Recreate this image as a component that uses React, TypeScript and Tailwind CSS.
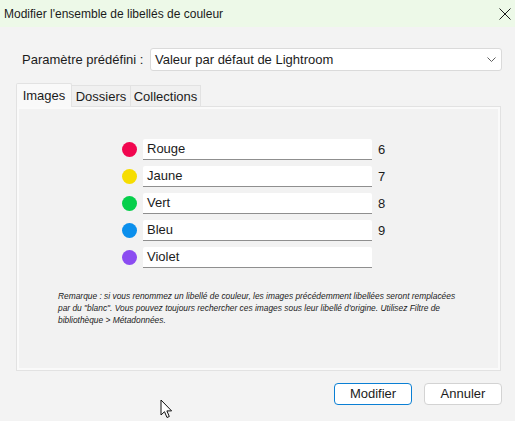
import React from "react";

const labels = [
  { name: "Rouge", color: "bg-[#f1064f]", key: "6" },
  { name: "Jaune", color: "bg-[#f6dd00]", key: "7" },
  { name: "Vert", color: "bg-[#06cf4b]", key: "8" },
  { name: "Bleu", color: "bg-[#0b8fec]", key: "9" },
  { name: "Violet", color: "bg-[#8b4cf1]", key: "" },
];

const CloseIcon = () => (
  <svg width="12" height="12" viewBox="0 0 12 12" fill="none" stroke="#1a1a1a" strokeWidth="1">
    <path d="M0.5 0.5 L11.5 11.5 M11.5 0.5 L0.5 11.5" />
  </svg>
);

const Chevron = () => (
  <svg width="9" height="5" viewBox="0 0 9 5" fill="none" stroke="#5f5f5f" strokeWidth="1">
    <path d="M0.5 0.5 L4.5 4.5 L8.5 0.5" />
  </svg>
);

const Cursor = () => (
  <svg width="13" height="20" viewBox="0 0 13 20" className="absolute left-[160px] top-[399px]">
    <path
      d="M1 1 L1 16 L4.5 12.7 L7 18.5 L9.3 17.5 L6.9 11.9 L11.6 11.9 Z"
      fill="#ffffff"
      stroke="#111111"
      strokeWidth="1"
      strokeLinejoin="round"
    />
  </svg>
);

export default function App() {
  return (
    <div className="relative w-[515px] h-[421px] overflow-hidden bg-[#f3f3f3] font-['Segoe_UI','Liberation_Sans',sans-serif] text-[#1b1b1b]">
      {/* barre de titre */}
      <div className="flex h-[27px] items-center justify-between bg-[#edf9e8] pl-[4px] pr-[4px]">
        <span className="text-[12px]">Modifier l'ensemble de libellés de couleur</span>
        <CloseIcon />
      </div>

      {/* paramètre prédéfini */}
      <div className="mt-[21px] flex items-center pl-[22px] pr-[13px]">
        <span className="w-[128px] text-[13px]">Paramètre prédéfini :</span>
        <div className="flex h-[23px] flex-1 items-center justify-between rounded-[3px] border border-[#dadada] bg-white pl-[4px] pr-[5px]">
          <span className="text-[13px]">Valeur par défaut de Lightroom</span>
          <Chevron />
        </div>
      </div>

      {/* onglets */}
      <div className="mt-[12px] flex items-end pl-[16px]">
        <div className="relative z-10 -mb-px flex h-[24px] w-[56px] items-center justify-center rounded-t-[2px] border border-b-0 border-[#e2e2e2] bg-[#f9f9f9] text-[13px]">
          Images
        </div>
        <div className="flex h-[21px] w-[59px] items-center justify-center border border-l-0 border-b-0 border-[#e2e2e2] bg-[#f0f0f0] pt-[2px] text-[13px]">
          Dossiers
        </div>
        <div className="flex h-[21px] w-[70px] items-center justify-center border border-l-0 border-b-0 border-[#e2e2e2] bg-[#f0f0f0] pt-[2px] text-[13px]">
          Collections
        </div>
      </div>

      {/* panneau */}
      <div className="ml-[16px] mr-[14px] h-[265px] border border-[#e2e2e2] bg-[#f2f2f2] shadow-[inset_0_0_0_2px_#fafafa]">
        <div className="mt-[32px] flex flex-col gap-[6px] pl-[105px]">
          {labels.map((l) => (
            <div key={l.name} className="flex h-[21px] items-center">
              <span className={`h-[15px] w-[15px] rounded-full ${l.color}`} />
              <div className="ml-[6px] flex h-[21px] w-[229px] items-center rounded-t-[2px] border-b border-[#8f8f8f] bg-white pl-[4px] text-[13px]">
                {l.name}
              </div>
              <span className="ml-[6px] text-[13px]">{l.key}</span>
            </div>
          ))}
        </div>
        <p className="mt-[22px] pl-[41px] text-[8.4px] italic leading-[12px] text-[#222]">
          <span className="block whitespace-nowrap">
            Remarque : si vous renommez un libellé de couleur, les images précédemment libellées seront remplacées
          </span>
          <span className="block whitespace-nowrap">
            par du "blanc". Vous pouvez toujours rechercher ces images sous leur libellé d'origine. Utilisez Filtre de
          </span>
          <span className="block whitespace-nowrap">bibliothèque &gt; Métadonnées.</span>
        </p>
      </div>

      {/* boutons */}
      <div className="mt-[12px] flex justify-end gap-[12px] pr-[13px]">
        <button className="h-[22px] w-[78px] rounded-[4px] border border-[#0a7fd4] bg-white text-[13px]">
          Modifier
        </button>
        <button className="h-[22px] w-[78px] rounded-[4px] border border-[#d3d3d3] bg-white text-[13px]">
          Annuler
        </button>
      </div>

      <Cursor />
    </div>
  );
}
